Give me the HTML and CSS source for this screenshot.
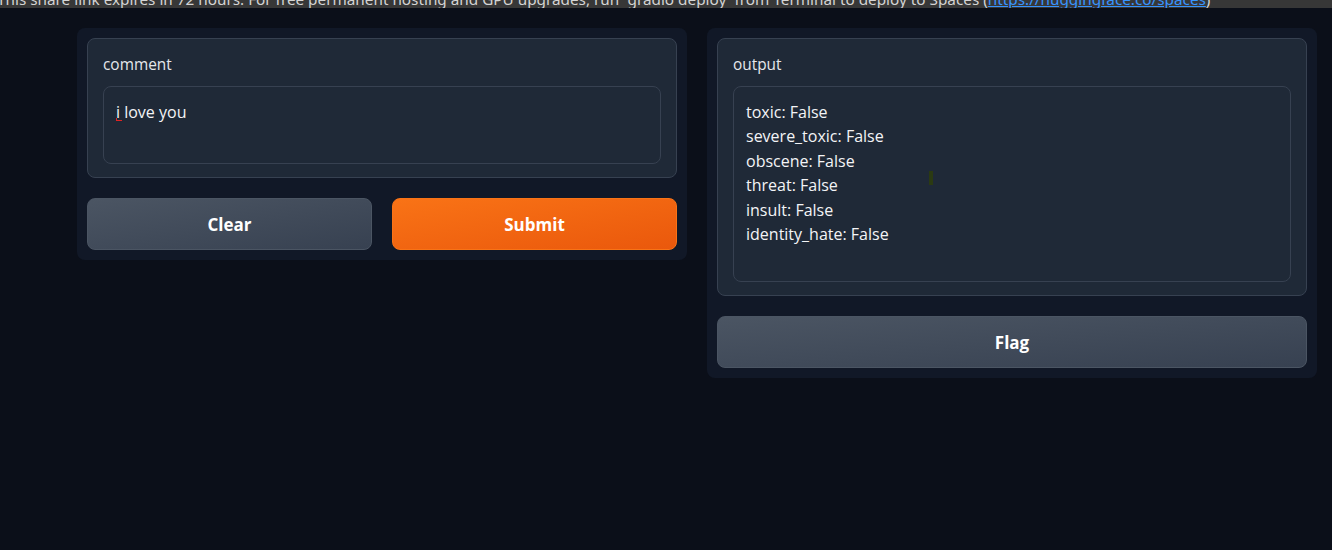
FILE: index.html
```
<!DOCTYPE html>
<html lang="en">
<head>
<meta charset="utf-8">
<title>Gradio</title>
<link rel="stylesheet" href="styles.css">
</head>
<body>
<div class="notice"><div class="notice-text">This share link expires in 72 hours. For free permanent hosting and GPU upgrades, run `gradio deploy` from Terminal to deploy to Spaces (<a href="#">https://huggingface.co/spaces</a>)</div></div>
<main class="app">
  <section class="panel">
    <div class="block">
      <div class="label">comment</div>
      <div class="textbox input-box"><span class="typo">i</span> love you</div>
    </div>
    <div class="row">
      <button class="btn secondary">Clear</button>
      <button class="btn primary">Submit</button>
    </div>
  </section>
  <section class="panel">
    <div class="block">
      <div class="label">output</div>
      <div class="textbox output-box">toxic: False<br>severe_toxic: False<br>obscene: False<br>threat: False<br>insult: False<br>identity_hate: False</div>
    </div>
    <div class="row">
      <button class="btn secondary">Flag</button>
    </div>
  </section>
</main>
<div class="cursor-mark"></div>
</body>
</html>
```
FILE: styles.css
```
* { box-sizing: border-box; }
html, body {
  margin: 0;
  padding: 0;
  background: #0b0f19;
  height: 100%;
}
body {
  font-family: "Open Sans", "Noto Sans", sans-serif;
  color: #e5e7eb;
  position: relative;
  overflow: hidden;
}
.notice {
  height: 8px;
  background: #373737;
  overflow: hidden;
  white-space: nowrap;
  font-family: "Noto Sans", "Open Sans", sans-serif;
  font-size: 15.3px;
  color: #d4d4d4;
  line-height: 16px;
}
.notice-text {
  display: block;
  margin-top: -9px;
  margin-left: -3px;
}
.notice a { color: #3794ff; }
.app {
  display: flex;
  gap: 20px;
  padding: 20px 15px 0 77px;
  align-items: flex-start;
}
.panel {
  flex: 0 0 610px;
  background: #111827;
  border-radius: 8px;
  padding: 10px;
  display: flex;
  flex-direction: column;
  gap: 20px;
}
.block {
  background: #1f2937;
  border: 1px solid #374151;
  border-radius: 8px;
  padding: 15px 15px 13px 15px;
}
.label {
  font-size: 15.4px;
  line-height: 22px;
  margin-bottom: 10px;
  color: #e5e7eb;
}
.textbox {
  background: #1f2937;
  border: 1px solid #374151;
  border-radius: 8px;
  padding: 13px 12px;
  font-size: 16px;
  line-height: 24.4px;
  color: #f3f4f6;
}
.input-box { height: 78px; }
.output-box { height: 196px; }
.typo {
  position: relative;
}
.typo::after {
  content: "";
  position: absolute;
  left: 0;
  bottom: 2px;
  width: 5px;
  height: 2px;
  border-bottom: 1px solid #e02424;
  border-left: 1px solid #e02424;
}
.row {
  display: flex;
  gap: 20px;
}
.btn {
  flex: 1;
  height: 52px;
  border-radius: 8px;
  font-family: inherit;
  font-size: 17px;
  font-weight: 700;
  color: #ffffff;
  cursor: pointer;
}
.secondary {
  background: linear-gradient(to bottom right, #4b5563, #374151);
  border: 1px solid #4b5563;
}
.primary {
  background: linear-gradient(to bottom right, #f97316, #ea580c);
  border: 1px solid #f97316;
}
.cursor-mark {
  position: absolute;
  left: 929px;
  top: 171px;
  width: 4px;
  height: 14px;
  background: #2b3a12;
}
```
